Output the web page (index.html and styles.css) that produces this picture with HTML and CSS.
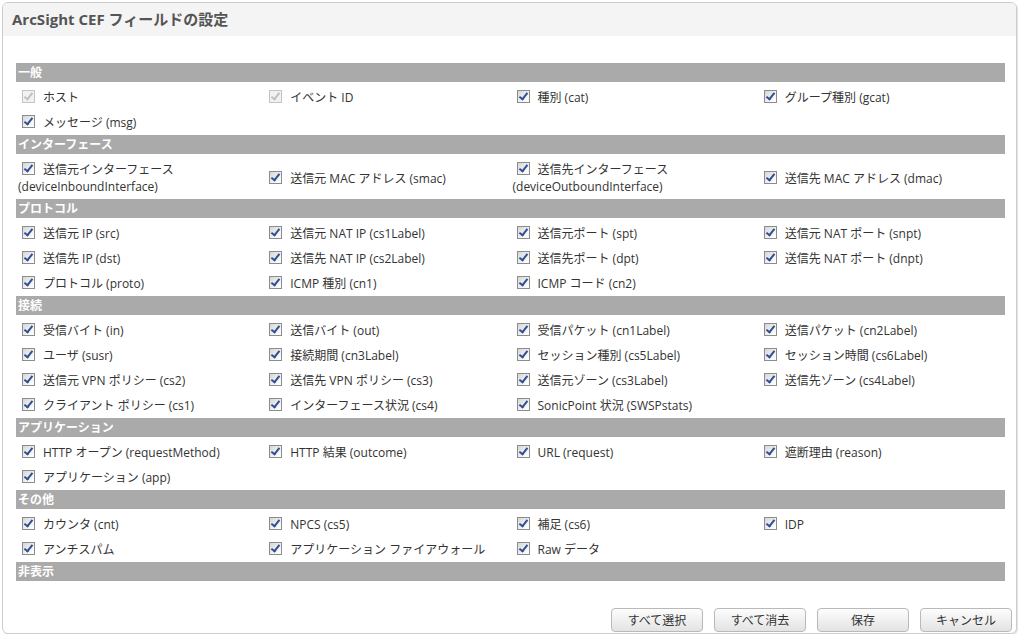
FILE: index.html
```html
<!DOCTYPE html>
<html lang="ja">
<head>
    <meta charset="UTF-8">
    <title>ArcSight CEF フィールドの設定</title>
    <link rel="stylesheet" href="styles.css">
</head>
<body>
    <div class="dialog">
        <div class="dialog-header">
            <h1>ArcSight CEF フィールドの設定</h1>
        </div>

        <div class="dialog-body">
            <div class="group">
                <div class="group-title">一般</div>
                <div class="field-grid">
                    <div class="field"><label><input type="checkbox" checked disabled>ホスト</label></div>
                    <div class="field"><label><input type="checkbox" checked disabled>イベント ID</label></div>
                    <div class="field"><label><input type="checkbox" checked>種別 (cat)</label></div>
                    <div class="field"><label><input type="checkbox" checked>グループ種別 (gcat)</label></div>
                    <div class="field"><label><input type="checkbox" checked>メッセージ (msg)</label></div>
                </div>
            </div>

            <div class="group">
                <div class="group-title">インターフェース</div>
                <div class="field-grid">
                    <div class="field"><label><input type="checkbox" checked>送信元インターフェース (deviceInboundInterface)</label></div>
                    <div class="field"><label><input type="checkbox" checked>送信元 MAC アドレス (smac)</label></div>
                    <div class="field"><label><input type="checkbox" checked>送信先インターフェース (deviceOutboundInterface)</label></div>
                    <div class="field"><label><input type="checkbox" checked>送信先 MAC アドレス (dmac)</label></div>
                </div>
            </div>

            <div class="group">
                <div class="group-title">プロトコル</div>
                <div class="field-grid">
                    <div class="field"><label><input type="checkbox" checked>送信元 IP (src)</label></div>
                    <div class="field"><label><input type="checkbox" checked>送信元 NAT IP (cs1Label)</label></div>
                    <div class="field"><label><input type="checkbox" checked>送信元ポート (spt)</label></div>
                    <div class="field"><label><input type="checkbox" checked>送信元 NAT ポート (snpt)</label></div>
                    <div class="field"><label><input type="checkbox" checked>送信先 IP (dst)</label></div>
                    <div class="field"><label><input type="checkbox" checked>送信先 NAT IP (cs2Label)</label></div>
                    <div class="field"><label><input type="checkbox" checked>送信先ポート (dpt)</label></div>
                    <div class="field"><label><input type="checkbox" checked>送信先 NAT ポート (dnpt)</label></div>
                    <div class="field"><label><input type="checkbox" checked>プロトコル (proto)</label></div>
                    <div class="field"><label><input type="checkbox" checked>ICMP 種別 (cn1)</label></div>
                    <div class="field"><label><input type="checkbox" checked>ICMP コード (cn2)</label></div>
                </div>
            </div>

            <div class="group">
                <div class="group-title">接続</div>
                <div class="field-grid">
                    <div class="field"><label><input type="checkbox" checked>受信バイト (in)</label></div>
                    <div class="field"><label><input type="checkbox" checked>送信バイト (out)</label></div>
                    <div class="field"><label><input type="checkbox" checked>受信パケット (cn1Label)</label></div>
                    <div class="field"><label><input type="checkbox" checked>送信パケット (cn2Label)</label></div>
                    <div class="field"><label><input type="checkbox" checked>ユーザ (susr)</label></div>
                    <div class="field"><label><input type="checkbox" checked>接続期間 (cn3Label)</label></div>
                    <div class="field"><label><input type="checkbox" checked>セッション種別 (cs5Label)</label></div>
                    <div class="field"><label><input type="checkbox" checked>セッション時間 (cs6Label)</label></div>
                    <div class="field"><label><input type="checkbox" checked>送信元 VPN ポリシー (cs2)</label></div>
                    <div class="field"><label><input type="checkbox" checked>送信先 VPN ポリシー (cs3)</label></div>
                    <div class="field"><label><input type="checkbox" checked>送信元ゾーン (cs3Label)</label></div>
                    <div class="field"><label><input type="checkbox" checked>送信先ゾーン (cs4Label)</label></div>
                    <div class="field"><label><input type="checkbox" checked>クライアント ポリシー (cs1)</label></div>
                    <div class="field"><label><input type="checkbox" checked>インターフェース状況 (cs4)</label></div>
                    <div class="field"><label><input type="checkbox" checked>SonicPoint 状況 (SWSPstats)</label></div>
                </div>
            </div>

            <div class="group">
                <div class="group-title">アプリケーション</div>
                <div class="field-grid">
                    <div class="field"><label><input type="checkbox" checked>HTTP オープン (requestMethod)</label></div>
                    <div class="field"><label><input type="checkbox" checked>HTTP 結果 (outcome)</label></div>
                    <div class="field"><label><input type="checkbox" checked>URL (request)</label></div>
                    <div class="field"><label><input type="checkbox" checked>遮断理由 (reason)</label></div>
                    <div class="field"><label><input type="checkbox" checked>アプリケーション (app)</label></div>
                </div>
            </div>

            <div class="group">
                <div class="group-title">その他</div>
                <div class="field-grid">
                    <div class="field"><label><input type="checkbox" checked>カウンタ (cnt)</label></div>
                    <div class="field"><label><input type="checkbox" checked>NPCS (cs5)</label></div>
                    <div class="field"><label><input type="checkbox" checked>補足 (cs6)</label></div>
                    <div class="field"><label><input type="checkbox" checked>IDP</label></div>
                    <div class="field"><label><input type="checkbox" checked>アンチスパム</label></div>
                    <div class="field"><label><input type="checkbox" checked>アプリケーション ファイアウォール</label></div>
                    <div class="field"><label><input type="checkbox" checked>Raw データ</label></div>
                </div>
            </div>

            <div class="group">
                <div class="group-title">非表示</div>
            </div>
        </div>

        <div class="dialog-footer">
            <button class="btn">すべて選択</button>
            <button class="btn">すべて消去</button>
            <button class="btn">保存</button>
            <button class="btn">キャンセル</button>
        </div>
    </div>
</body>
</html>
```

FILE: styles.css
```css
* {
    margin: 0;
    padding: 0;
    box-sizing: border-box;
}

body {
    font-family: 'Open Sans', 'Noto Sans CJK JP', sans-serif;
    font-size: 12px;
    color: #333;
    background: #fff;
}

.dialog {
    display: flex;
    flex-direction: column;
    width: 1015px;
    height: 632px;
    margin: 2px 0 0 2px;
    background: #fff;
    border: 1px solid #cdcdcd;
    border-radius: 6px;
    box-shadow: 1px 1px 1px rgba(0, 0, 0, 0.12);
    overflow: hidden;
}

.dialog-header {
    height: 33px;
    padding-left: 9px;
    background: #f4f4f4;
}

.dialog-header h1 {
    font-size: 15px;
    font-weight: 700;
    line-height: 33px;
    color: #555;
}

.dialog-body {
    flex: 1;
    padding: 27px 11px 0 13px;
}

.group-title {
    height: 19px;
    padding-left: 2px;
    background: #aaa;
    color: #fff;
    font-weight: 700;
    line-height: 19px;
}

.field-grid {
    display: grid;
    grid-template-columns: repeat(4, 1fr);
    padding-top: 3px;
}

.field {
    display: flex;
    align-items: center;
    min-height: 25px;
    padding: 4px 2px;
    line-height: 17px;
}

/* checkbox */
.field input {
    appearance: none;
    -webkit-appearance: none;
    position: relative;
    width: 13px;
    height: 13px;
    margin: 0 8px 0 4px;
    vertical-align: -1px;
    border: 1px solid #8c8c8c;
    background: linear-gradient(135deg, #d6d6d6, #f6f6f6 70%, #fff);
}

.field input:checked::after {
    content: '';
    position: absolute;
    left: 3px;
    top: 0px;
    width: 3px;
    height: 7px;
    border-right: 2px solid #2f4f94;
    border-bottom: 2px solid #2f4f94;
    transform: rotate(38deg);
}

.field input:disabled {
    border-color: #c4c4c4;
    background: #f1f1f1;
}

.field input:disabled::after {
    border-color: #c0c0c0;
}

.dialog-footer {
    display: flex;
    justify-content: flex-end;
    gap: 11px;
    padding: 0 4px 1px 0;
}

.btn {
    width: 92px;
    height: 24px;
    font-family: inherit;
    font-size: 12px;
    color: #333;
    border: 1px solid #b9b9b9;
    border-radius: 4px;
    background: linear-gradient(#fdfdfd, #e3e3e3);
}
```
